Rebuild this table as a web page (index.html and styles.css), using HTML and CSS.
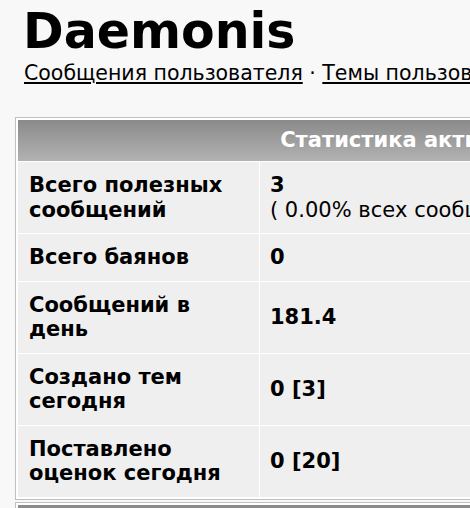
FILE: index.html
```html
<!DOCTYPE html>
<html lang="ru">
<head>
<meta charset="utf-8">
<title>Daemonis</title>
<link rel="stylesheet" href="styles.css">
</head>
<body>
<h1 class="title">Daemonis</h1>
<div class="nav"><a href="#">Сообщения пользователя</a> · <a href="#">Темы пользователя</a></div>
<div class="box">
<table class="stats">
<thead>
<tr><th colspan="2" class="head">Статистика активности</th></tr>
</thead>
<tbody>
<tr><td class="label">Всего полезных сообщений</td><td class="value">3<br><span class="note">( 0.00% всех сообщений )</span></td></tr>
<tr><td class="label">Всего баянов</td><td class="value">0</td></tr>
<tr><td class="label">Сообщений в день</td><td class="value">181.4</td></tr>
<tr><td class="label">Создано тем сегодня</td><td class="value">0 [3]</td></tr>
<tr><td class="label">Поставлено оценок сегодня</td><td class="value">0 [20]</td></tr>
</tbody>
</table>
</div>
<div class="box box-next">
<table class="stats">
<thead>
<tr><th colspan="2" class="head">Информация</th></tr>
</thead>
</table>
</div>
</body>
</html>
```
FILE: styles.css
```css
html {
  overflow: hidden;
  background: #f8f8f8;
}
body {
  margin: 0;
  padding: 0 0 0 15px;
  font-family: "DejaVu Sans", Verdana, sans-serif;
  color: #000;
  background: #f8f8f8;
  width: 1000px;
}
.title {
  margin: 0 0 0 8px;
  padding-top: 4px;
  font-size: 49px;
  line-height: 56px;
  font-weight: bold;
}
.nav {
  margin: 1px 0 0 9px;
  font-size: 20.5px;
  line-height: 24px;
}
.nav a {
  color: #000;
  text-decoration: underline;
}
.box {
  margin-top: 32px;
  border: 1px solid #c0c0c0;
  padding: 1px;
  background: #fff;
  width: max-content;
}
.box-next {
  margin-top: 2px;
}
.stats {
  border-spacing: 1px;
  width: 807px;
  font-size: 21px;
  line-height: 24.5px;
}
.head {
  background: linear-gradient(#8a8a8a, #b2b2b2);
  color: #fff;
  font-weight: bold;
  text-align: center;
  padding: 8px 10px;
  line-height: 25px;
}
.label {
  width: 220px;
  background: #efefef;
  font-weight: bold;
  padding: 11px 10px 11px 11px;
  vertical-align: middle;
}
.value {
  background: #efefef;
  font-weight: bold;
  padding: 11px 10px;
  vertical-align: middle;
}
.note {
  font-weight: normal;
}
```
